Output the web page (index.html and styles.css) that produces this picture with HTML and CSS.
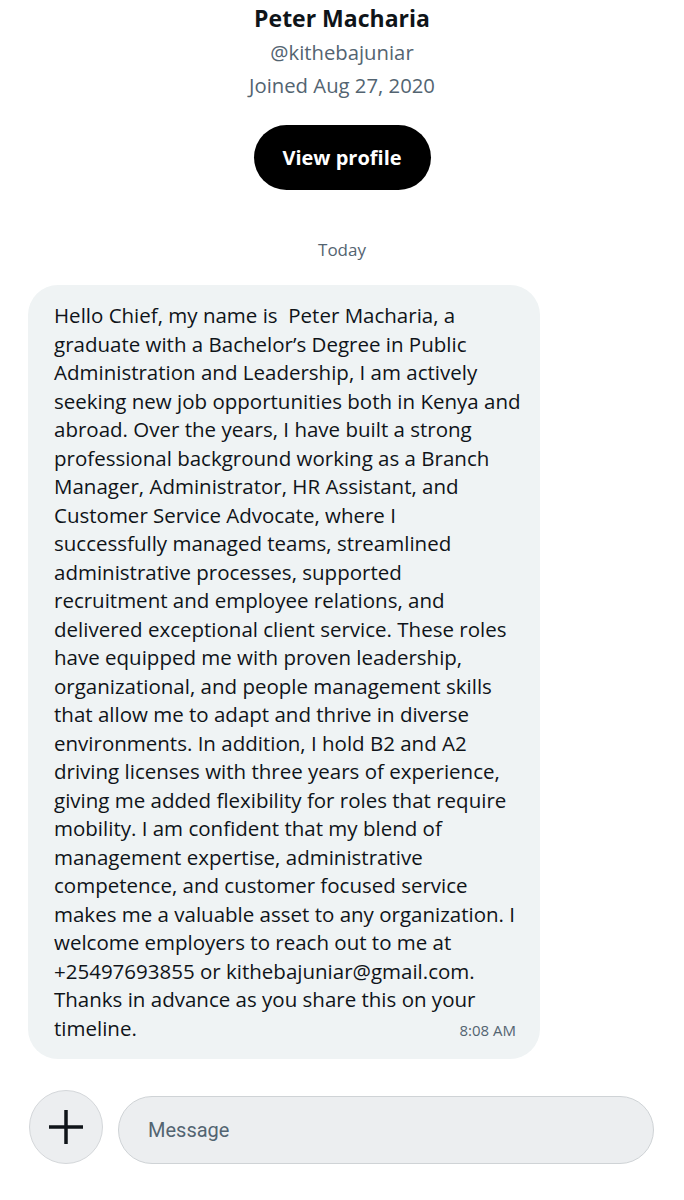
FILE: index.html
```html
<!DOCTYPE html>
<html>
<head>
<meta charset="utf-8">
<link rel="stylesheet" href="styles.css">
</head>
<body>
<div class="page">
  <header class="profile">
    <div class="name">Peter Macharia</div>
    <div class="handle">@kithebajuniar</div>
    <div class="joined">Joined Aug 27, 2020</div>
    <button class="view-btn">View profile</button>
  </header>
  <div class="day">Today</div>
  <div class="thread">
    <div class="bubble">
      <p class="msg">Hello Chief, my name is &nbsp;Peter Macharia, a<br>graduate with a Bachelor’s Degree in Public<br>Administration and Leadership, I am actively<br>seeking new job opportunities both in Kenya and<br>abroad. Over the years, I have built a strong<br>professional background working as a Branch<br>Manager, Administrator, HR Assistant, and<br>Customer Service Advocate, where I<br>successfully managed teams, streamlined<br>administrative processes, supported<br>recruitment and employee relations, and<br>delivered exceptional client service. These roles<br>have equipped me with proven leadership,<br>organizational, and people management skills<br>that allow me to adapt and thrive in diverse<br>environments. In addition, I hold B2 and A2<br>driving licenses with three years of experience,<br>giving me added flexibility for roles that require<br>mobility. I am confident that my blend of<br>management expertise, administrative<br>competence, and customer focused service<br>makes me a valuable asset to any organization. I<br>welcome employers to reach out to me at<br>+25497693855 or kithebajuniar@gmail.com.<br>Thanks in advance as you share this on your</p>
      <div class="last-line"><span>timeline.</span><span class="time">8:08 AM</span></div>
    </div>
  </div>
  <div class="composer">
    <button class="plus" aria-label="Add">
      <svg width="36" height="36" viewBox="0 0 36 36"><path d="M18 1v34M1 18h34" stroke="#0f1419" stroke-width="3.5" fill="none"/></svg>
    </button>
    <div class="input">Message</div>
  </div>
</div>
</body>
</html>
```
FILE: styles.css
```css
html, body {
  margin: 0;
  padding: 0;
  background: #ffffff;
}
body {
  font-family: "Open Sans", "Liberation Sans", sans-serif;
  color: #0f1419;
}
.page {
  width: 684px;
  height: 1200px;
  display: flex;
  flex-direction: column;
}
.profile {
  display: flex;
  flex-direction: column;
  align-items: center;
  padding-top: 3px;
}
.name {
  font-size: 23px;
  font-weight: 700;
  line-height: 30px;
}
.handle {
  margin-top: 3px;
}
.handle, .joined {
  font-size: 20.3px;
  color: #536471;
  line-height: 33px;
}
.view-btn {
  margin-top: 23px;
  width: 177px;
  height: 65px;
  border: none;
  border-radius: 33px;
  background: #000;
  color: #fff;
  font-family: inherit;
  font-size: 20px;
  font-weight: 700;
}
.day {
  text-align: center;
  margin-top: 48px;
  font-size: 17px;
  color: #536471;
  line-height: 24px;
}
.thread {
  padding: 23px 0 0 28px;
}
.bubble {
  width: 512px;
  box-sizing: border-box;
  background: #eff3f4;
  border-radius: 30px;
  padding: 16px 24px 15px 26px;
}
.msg {
  margin: 0;
  font-size: 20.5px;
  line-height: 28.5px;
  white-space: nowrap;
}
.last-line {
  display: flex;
  justify-content: space-between;
  align-items: baseline;
  font-size: 20.5px;
  line-height: 28.5px;
}
.time {
  font-size: 15px;
  color: #536471;
}
.composer {
  display: flex;
  align-items: flex-start;
  gap: 15px;
  padding: 31px 30px 0 29px;
}
.plus {
  width: 74px;
  height: 74px;
  flex: none;
  border-radius: 50%;
  border: 1.5px solid #d4d7da;
  background: #eceef0;
  display: flex;
  align-items: center;
  justify-content: center;
  padding: 0;
}
.input {
  flex: 1;
  margin-top: 6px;
  height: 68px;
  box-sizing: border-box;
  border: 1.5px solid #cfd3d6;
  border-radius: 34px;
  background: #eceef0;
  display: flex;
  align-items: center;
  padding-left: 29px;
  font-family: Roboto, "Liberation Sans", sans-serif;
  font-size: 20px;
  color: #536471;
}
```
